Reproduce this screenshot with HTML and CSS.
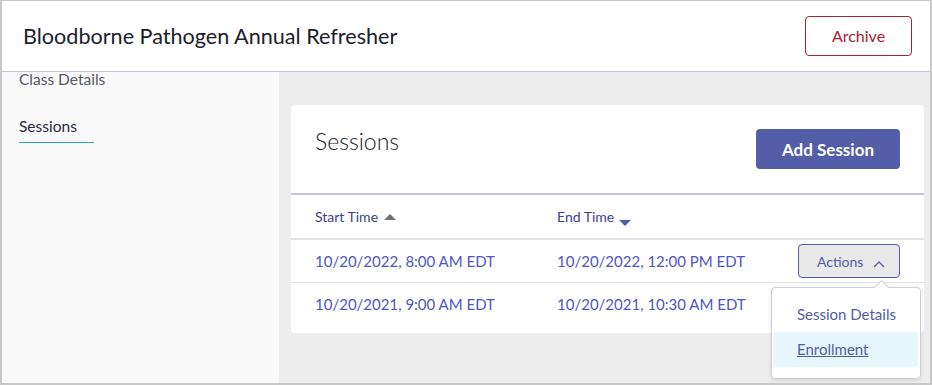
FILE: index.html
```html
<!doctype html>
<html>
	<head>
		<title>Bloodborne Pathogen Annual Refresher</title>
		<meta charset="utf-8" />
		<meta name="viewport" content="width=device-width, initial-scale=1" />
		<link rel="stylesheet" href="styles.css">
	</head>

	<body>
		<div id="frame">
			<div id="topbar">
				<h1 id="title">Bloodborne Pathogen Annual Refresher</h1>
				<button class="btn-archive">Archive</button>
			</div>

			<div id="body">
				<div id="sidebar">
					<div class="navitem">Class Details</div>
					<div class="navitem active">Sessions</div>
				</div>

				<div id="main">
					<div class="card">
						<div class="cardhead">
							<h2 class="cardtitle">Sessions</h2>
							<button class="btn-primary">Add Session</button>
						</div>

						<div class="row headrow">
							<div class="col1">Start Time <span class="sort-up"></span></div>
							<div class="col2">End Time <span class="sort-down"></span></div>
							<div class="col3"></div>
						</div>

						<div class="row">
							<div class="col1 link">10/20/2022, 8:00 AM EDT</div>
							<div class="col2 link">10/20/2022, 12:00 PM EDT</div>
							<div class="col3">
								<div class="actions">
									<button class="btn-actions">Actions
										<svg width="12" height="8" viewBox="0 0 12 8"><polyline points="1,7 6,2 11,7" fill="none" stroke="#5a5fa8" stroke-width="1.3"/></svg>
									</button>
									<div class="menu">
										<div class="menuitem">Session Details</div>
										<div class="menuitem hover">Enrollment</div>
									</div>
								</div>
							</div>
						</div>

						<div class="row last">
							<div class="col1 link">10/20/2021, 9:00 AM EDT</div>
							<div class="col2 link">10/20/2021, 10:30 AM EDT</div>
							<div class="col3"></div>
						</div>
					</div>
				</div>
			</div>
		</div>
	</body>
</html>
```

FILE: styles.css
```css
body {
	margin: 0;
	font-family: 'Lato', 'Open Sans', sans-serif;
	background-color: #c8c8c8;
}

#frame {
	box-sizing: border-box;
	width: 932px;
	height: 385px;
	border: 2px solid #c8c8c8;
	border-top-width: 1px;
	display: flex;
	flex-direction: column;
	background-color: #ededed;
}

#topbar {
	box-sizing: border-box;
	height: 71px;
	flex: none;
	background-color: white;
	border-bottom: 1px solid #c4c2d4;
	display: flex;
	align-items: center;
	justify-content: space-between;
	padding: 0 18px 0 21px;
}

#title {
	margin: 0;
	font-size: 21.6px;
	font-weight: normal;
	color: #1d1d2b;
}

.btn-archive {
	width: 107px;
	height: 40px;
	margin-top: -1px;
	background: white;
	border: 1px solid #a8232f;
	border-radius: 4px;
	color: #a8232f;
	font-family: inherit;
	font-size: 16px;
}

#body {
	flex: 1;
	display: flex;
	min-height: 0;
}

#sidebar {
	width: 277px;
	flex: none;
	background-color: #f9f9f9;
	padding-left: 17px;
	box-sizing: border-box;
}

.navitem {
	margin-top: -2px;
	font-size: 15.5px;
	line-height: 18px;
	color: #575766;
}

.navitem.active {
	display: inline-block;
	width: 75px;
	margin-top: 29px;
	padding-bottom: 7px;
	border-bottom: 1px solid #2b9fd4;
	color: #2a2a3a;
}

#main {
	flex: 1;
	padding: 33px 6px 0 12px;
}

.card {
	background-color: white;
	border-radius: 4px;
	padding-bottom: 8px;
}

.cardhead {
	box-sizing: border-box;
	height: 90px;
	border-bottom: 2px solid #c5c3d6;
	display: flex;
	justify-content: space-between;
	align-items: flex-start;
	padding: 0 24px;
}

.cardtitle {
	margin: 22px 0 0 0;
	font-size: 23px;
	line-height: 28px;
	font-weight: 300;
	color: #222;
}

.btn-primary {
	margin-top: 24px;
	width: 144px;
	height: 40px;
	background-color: #535da8;
	border: none;
	border-radius: 4px;
	color: white;
	font-family: inherit;
	font-size: 17px;
	font-weight: bold;
}

.row {
	display: flex;
	align-items: center;
	height: 42px;
	padding: 0 24px;
	border-bottom: 1px solid #e2e2e2;
	font-size: 15px;
}

.row.last {
	border-bottom: none;
}

.headrow {
	height: 43px;
	border-bottom: 2px solid #e3e3e3;
	font-size: 14px;
	color: #3d3f8a;
}

.col1 {
	width: 242px;
}

.col2 {
	flex: 1;
}

.col3 {
	width: 102px;
}

.link {
	color: #4f55c4;
}

.sort-up {
	display: inline-block;
	margin-left: 2px;
	border-left: 6px solid transparent;
	border-right: 6px solid transparent;
	border-bottom: 6px solid #707070;
	vertical-align: 2px;
}

.sort-down {
	display: inline-block;
	margin-left: 1px;
	border-left: 6px solid transparent;
	border-right: 6px solid transparent;
	border-top: 6px solid #535da8;
	vertical-align: -4px;
}

.actions {
	position: relative;
}

.btn-actions {
	box-sizing: border-box;
	width: 102px;
	height: 34px;
	background-color: #e8e8e8;
	border: 1px solid #535da8;
	border-radius: 4px;
	color: #535da8;
	font-family: inherit;
	font-size: 14px;
	padding: 0 0 0 4px;
}

.btn-actions svg {
	margin-left: 6px;
	vertical-align: -1px;
}

.menu {
	position: absolute;
	top: 43px;
	left: -27px;
	width: 150px;
	box-sizing: border-box;
	background: white;
	border: 1px solid #cfcfdb;
	border-radius: 4px;
	box-shadow: 0 1px 4px rgba(0, 0, 0, 0.12);
	padding: 9px 2px 11px 2px;
	z-index: 2;
}

.menu:before {
	content: "";
	position: absolute;
	top: -6px;
	left: 104px;
	width: 10px;
	height: 10px;
	background: white;
	border-left: 1px solid #cfcfdb;
	border-top: 1px solid #cfcfdb;
	transform: rotate(45deg);
}

.menuitem {
	position: relative;
	height: 35px;
	line-height: 35px;
	padding-left: 23px;
	font-size: 15px;
	color: #535da8;
}

.menuitem.hover {
	background-color: #e6f6fb;
	text-decoration: underline;
}
```
